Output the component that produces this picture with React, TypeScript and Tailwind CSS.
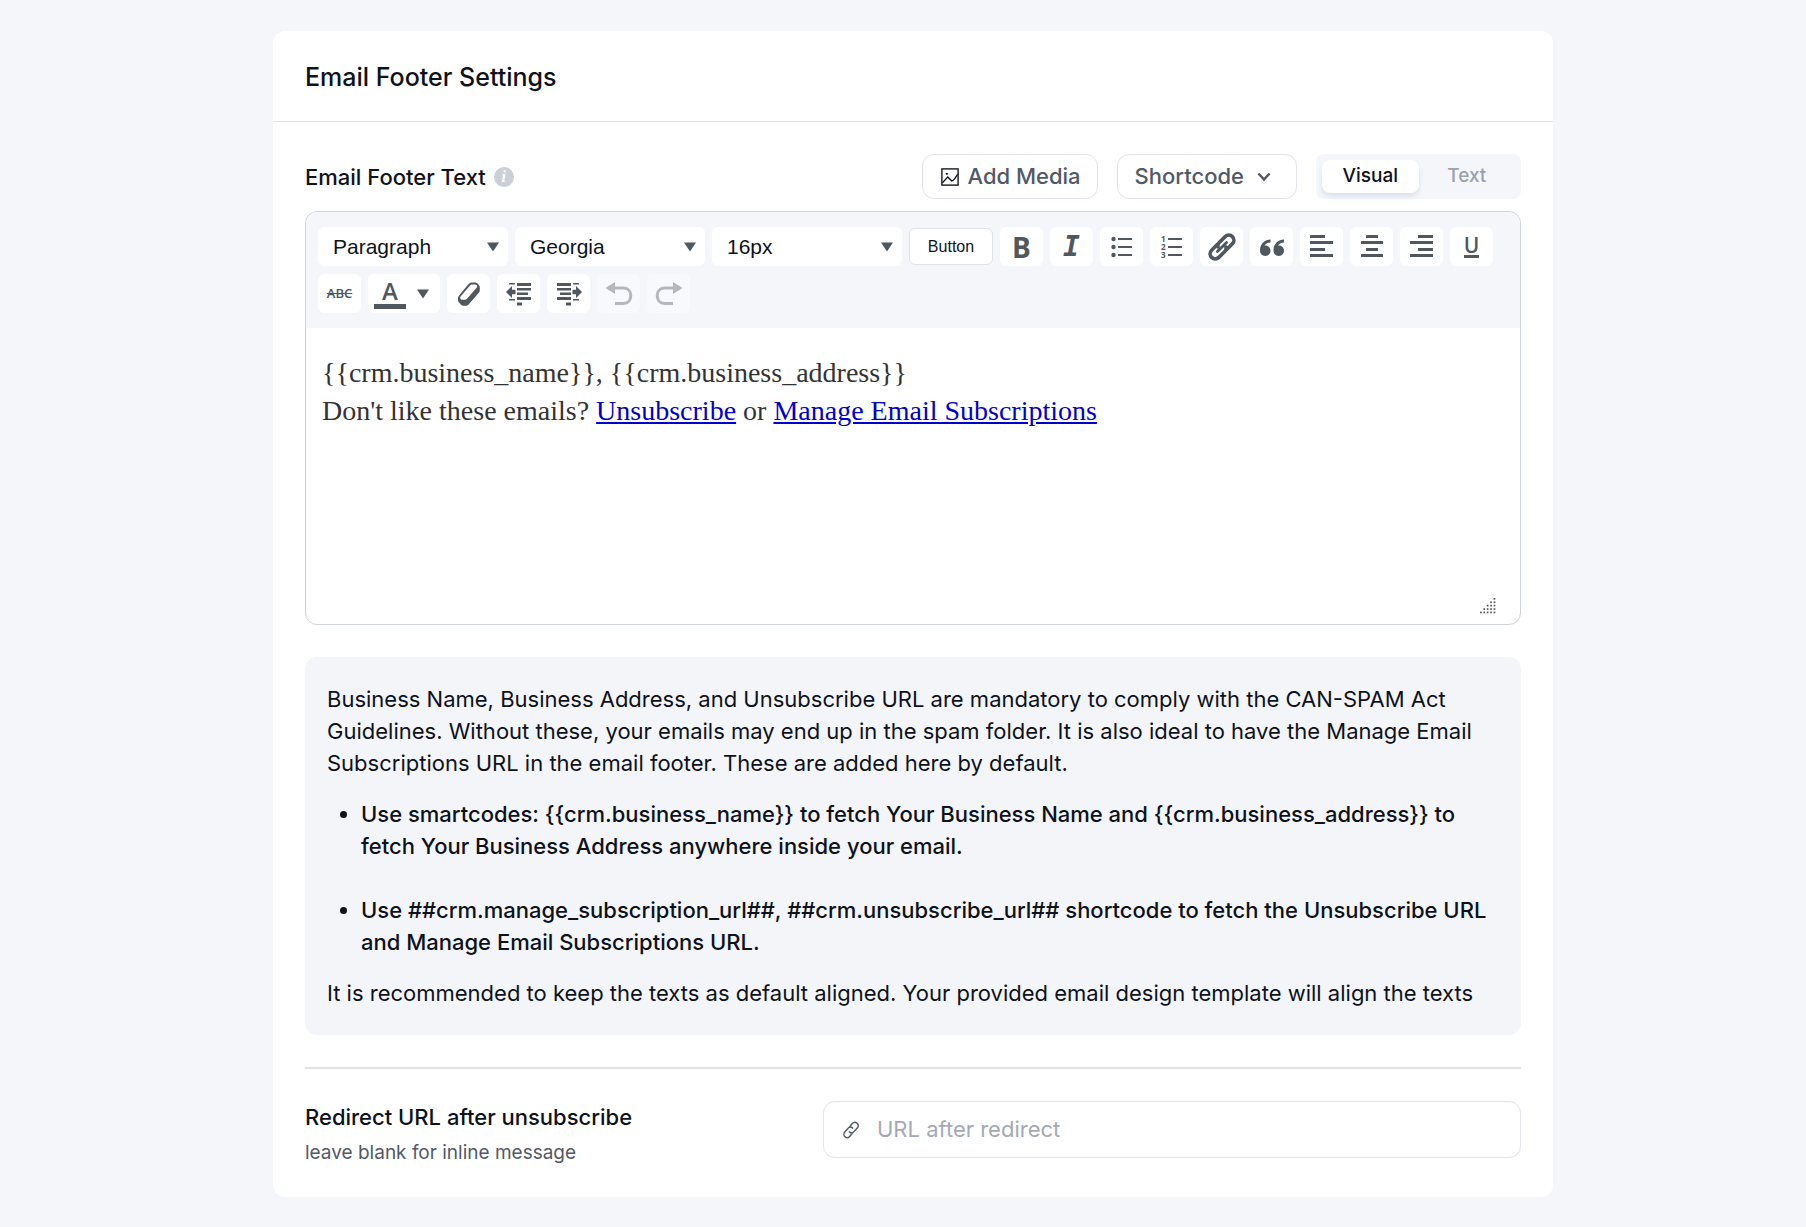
import { useState, type ReactNode } from "react";
import { ImQuotesLeft } from "react-icons/im";

const ui = {
  tool: "flex h-[39px] w-[43px] items-center justify-center rounded-md bg-white text-[#50575e] hover:bg-slate-50",
  outline:
    "flex h-[45px] items-center rounded-xl border border-[#e1e4ea] bg-white text-[22px] font-medium text-[#525866]",
};

const BLOCK_FORMATS = ["Paragraph", "Heading 1", "Heading 2", "Heading 3", "Preformatted"];
const FONT_FAMILIES = ["Georgia", "Arial", "Helvetica", "Verdana", "Tahoma"];
const FONT_SIZES = ["16px", "12px", "14px", "18px", "20px", "24px"];

function Caret() {
  return (
    <svg viewBox="0 0 12 10" className="h-[10px] w-[12px] fill-[#50575e]" aria-hidden="true">
      <path d="M0 0.5h12L6 9.5z" />
    </svg>
  );
}

function ToolbarSelect({ label, options }: { label: string; options: string[] }) {
  return (
    <div className="relative w-[190px]">
      <select
        aria-label={label}
        className="h-[39px] w-full appearance-none rounded-md bg-white pr-8 pl-[15px] font-['Liberation_Sans',sans-serif] text-[21px] text-[#0e121b]"
      >
        {options.map((option) => (
          <option key={option}>{option}</option>
        ))}
      </select>
      <span className="pointer-events-none absolute inset-y-0 right-[9px] flex items-center">
        <Caret />
      </span>
    </div>
  );
}

function ToolButton({
  label,
  disabled = false,
  children,
}: {
  label: string;
  disabled?: boolean;
  children: ReactNode;
}) {
  return (
    <button
      type="button"
      title={label}
      aria-label={label}
      disabled={disabled}
      className={`${ui.tool} disabled:bg-white/40 disabled:text-[#b4b7bb]`}
    >
      {children}
    </button>
  );
}

function Icon({ children }: { children: ReactNode }) {
  return (
    <svg viewBox="0 0 28 28" className="size-7" fill="currentColor" aria-hidden="true">
      {children}
    </svg>
  );
}

// each bar is [x, y, width]
function Bars({ bars }: { bars: [number, number, number][] }) {
  return (
    <Icon>
      {bars.map(([x, y, width]) => (
        <rect key={y} x={x} y={y} width={width} height="3" />
      ))}
    </Icon>
  );
}

function BulletListIcon() {
  return (
    <Icon>
      {[6, 14, 22].map((y) => (
        <g key={y}>
          <circle cx="5.5" cy={y} r="2.2" />
          <rect x="10" y={y - 1} width="14" height="2" />
        </g>
      ))}
    </Icon>
  );
}

function NumberListIcon() {
  return (
    <Icon>
      {[6, 14, 22].map((y, index) => (
        <g key={y}>
          <text x="3" y={y + 3} fontSize="8" fontWeight="700" fontFamily="Open Sans, sans-serif">
            {index + 1}
          </text>
          <rect x="10" y={y - 1} width="14" height="2" />
        </g>
      ))}
    </Icon>
  );
}

function LinkIcon() {
  return (
    <Icon>
      <g
        transform="rotate(-45 14 14)"
        fill="none"
        stroke="currentColor"
        strokeWidth="3.6"
        strokeLinecap="round"
      >
        <path d="M16.800 16.800c-.9 1.500-2.300 2.300-4 2.300H4.400a5.100 5.100 0 0 1 0-10.200h8" />
        <path d="M11.200 11.200c.9-1.500 2.300-2.300 4-2.300h8.400a5.100 5.100 0 0 1 0 10.200h-8" />
        <path d="M7.500 14h13" strokeWidth="2.8" />
      </g>
    </Icon>
  );
}

function ThinLinkIcon() {
  return (
    <svg
      viewBox="0 0 20 20"
      className="size-5 shrink-0"
      fill="none"
      stroke="#525866"
      strokeWidth="1.4"
      strokeLinecap="round"
      aria-hidden="true"
    >
      <g transform="rotate(-48 10 10)">
        <path d="M7.500 10c0 2.200 1 3.300 3 3.300h5.200a3.300 3.300 0 0 0 0-6.600h-3.500" />
        <path d="M12.500 10c0-2.200-1-3.300-3-3.300H4.300a3.300 3.300 0 0 0 0 6.600h3.500" />
      </g>
    </svg>
  );
}

function EraserIcon() {
  return (
    <Icon>
      <path
        fillRule="evenodd"
        d="M13.400 4.200C14.400 3 15.600 2.400 17 2.400h3.200c1 0 1.800.4 2.400 1.100l1.400 1.700c.6.800.8 1.500.8 2.400v2.600c0 1-.3 1.800-1 2.600L13.600 24.400c-.8.9-1.700 1.400-2.900 1.400H8.200c-1 0-1.800-.4-2.400-1.200l-2-2.400c-.5-.7-.8-1.400-.8-2.300v-1.600c0-1 .4-1.900 1.100-2.700zM15 5.600L5.800 16.300c-1.300 1.600-.4 3.500 1.500 3.500h2.300c1.100 0 1.900-.4 2.600-1.200l9.400-10.900C22.800 6.200 22 4.500 20.200 4.500h-2.700c-1 0-1.800.3-2.500 1.100z"
      />
    </Icon>
  );
}

function IndentIcon({ outdent = false }: { outdent?: boolean }) {
  return (
    <Icon>
      <g transform={outdent ? undefined : "matrix(-1 0 0 1 28 0)"}>
        <rect x="4" y="3" width="6" height="1.5" />
        <rect x="12" y="3" width="14" height="3" />
        <rect x="12" y="8" width="14" height="2.5" />
        <rect x="12" y="12.5" width="11" height="2.5" />
        <rect x="12" y="17" width="14" height="3" />
        <rect x="4" y="19" width="6" height="1.5" />
        <rect x="12" y="22.5" width="5" height="3" />
        <path d="M1 12l6-6v3.800h3.500v4.400H7V18z" />
      </g>
    </Icon>
  );
}

function HistoryIcon({ flip = false }: { flip?: boolean }) {
  return (
    <Icon>
      <g transform={flip ? "matrix(-1 0 0 1 28 0)" : undefined}>
        <path d="M0.5 8L10 2v12z" />
        <path
          d="M8 8h10.500c4.500 0 7.300 3.200 7.300 7.700s-2.800 7.700-7.300 7.700H10"
          fill="none"
          stroke="currentColor"
          strokeWidth="3"
        />
      </g>
    </Icon>
  );
}

function ImageIcon() {
  return (
    <svg viewBox="0 0 20 20" className="size-[18px]" fill="none" stroke="#0e121b" strokeWidth="1.5" aria-hidden="true">
      <rect x="1" y="1" width="18" height="18" />
      <path d="M1.5 16.5l6-6.500 4.500 4.500c2.500-.5 4-4 6.500-7.500" />
      <circle cx="6.5" cy="6.5" r="1.2" fill="#0e121b" stroke="none" />
    </svg>
  );
}

function ResizeGrip() {
  const dots = [0, 1, 2, 3, 4].flatMap((row) =>
    Array.from({ length: row + 1 }, (_, index) => [4 - index, row]),
  );
  return (
    <svg viewBox="0 0 16 16" className="size-4 fill-[#50575e]" aria-hidden="true">
      {dots.map(([column, row]) => (
        <rect key={`${column}-${row}`} x={column * 3.4} y={row * 3.4} width="1.7" height="1.7" />
      ))}
    </svg>
  );
}

function Toolbar() {
  return (
    <div className="flex flex-wrap gap-x-[7px] gap-y-[8px] rounded-t-xl bg-[#f4f6fa] px-3 py-[15px]">
      <ToolbarSelect label="Block format" options={BLOCK_FORMATS} />
      <ToolbarSelect label="Font family" options={FONT_FAMILIES} />
      <ToolbarSelect label="Font size" options={FONT_SIZES} />
      <div className="flex h-[39px] w-[84px] items-center">
        <button
          type="button"
          className="h-[37px] w-full rounded-md border border-[#dfe2e8] bg-white font-['Liberation_Sans',sans-serif] text-base text-[#0e121b]"
        >
          Button
        </button>
      </div>
      <ToolButton label="Bold">
        <span className="font-['Open_Sans',sans-serif] text-[28px] leading-none font-bold">B</span>
      </ToolButton>
      <ToolButton label="Italic">
        <span className="font-['DejaVu_Sans_Mono',monospace] text-[28px] leading-none font-bold italic">I</span>
      </ToolButton>
      <ToolButton label="Bulleted list">
        <BulletListIcon />
      </ToolButton>
      <ToolButton label="Numbered list">
        <NumberListIcon />
      </ToolButton>
      <ToolButton label="Insert link">
        <LinkIcon />
      </ToolButton>
      <ToolButton label="Blockquote">
        <ImQuotesLeft className="size-6" />
      </ToolButton>
      <ToolButton label="Align left">
        <Bars bars={[[2, 2, 15], [2, 8, 23], [2, 15, 15], [2, 21, 23]]} />
      </ToolButton>
      <ToolButton label="Align center">
        <Bars bars={[[8, 2, 12], [3, 8, 22], [8, 15, 12], [3, 21, 22]]} />
      </ToolButton>
      <ToolButton label="Align right">
        <Bars bars={[[10, 2, 15], [2, 8, 23], [10, 15, 15], [2, 21, 23]]} />
      </ToolButton>
      <ToolButton label="Underline">
        <span className="border-b-3 border-current font-['Open_Sans',sans-serif] text-[21px] leading-5 font-semibold">
          U
        </span>
      </ToolButton>
      <ToolButton label="Strikethrough">
        <span className="font-['Open_Sans',sans-serif] text-[13px] font-semibold line-through">ABC</span>
      </ToolButton>
      <div className="flex h-[39px] w-[72px] items-center rounded-md bg-white">
        <button
          type="button"
          aria-label="Text color"
          className="ml-[6px] flex w-8 justify-center border-b-5 border-[#50575e] font-['Open_Sans',sans-serif] text-2xl leading-[26px] font-semibold text-[#50575e]"
        >
          A
        </button>
        <button type="button" aria-label="Choose text color" className="flex flex-1 justify-center">
          <Caret />
        </button>
      </div>
      <ToolButton label="Clear formatting">
        <EraserIcon />
      </ToolButton>
      <ToolButton label="Decrease indent">
        <IndentIcon outdent />
      </ToolButton>
      <ToolButton label="Increase indent">
        <IndentIcon />
      </ToolButton>
      <ToolButton label="Undo" disabled>
        <HistoryIcon />
      </ToolButton>
      <ToolButton label="Redo" disabled>
        <HistoryIcon flip />
      </ToolButton>
    </div>
  );
}

function ModeSwitch() {
  const [mode, setMode] = useState("Visual");

  return (
    <div className="flex h-[45px] w-[205px] rounded-lg bg-[#f4f6fa] p-[6px]">
      {["Visual", "Text"].map((name) => (
        <button
          key={name}
          type="button"
          aria-pressed={mode === name}
          onClick={() => setMode(name)}
          className={`flex-1 rounded-lg text-[19px] font-medium ${
            mode === name ? "bg-white text-[#0e121b] shadow-md shadow-slate-300/60" : "text-[#99a0ae]"
          }`}
        >
          {name}
        </button>
      ))}
    </div>
  );
}

function FooterEditor() {
  return (
    <section>
      <div className="flex flex-wrap items-center justify-between gap-3">
        <div className="flex items-center gap-2">
          <h2 className="text-[22px] leading-8 font-medium">Email Footer Text</h2>
          <span
            title="This text is added to the bottom of every email"
            className="flex size-5 items-center justify-center rounded-full bg-[#cacfd8] font-['Liberation_Serif',serif] text-base leading-none font-bold text-white italic"
          >
            i
          </span>
        </div>
        <div className="flex flex-wrap items-center gap-[19px]">
          <button type="button" className={`${ui.outline} gap-2 pr-4 pl-[18px]`}>
            <ImageIcon />
            Add Media
          </button>
          <button type="button" className={`${ui.outline} gap-3 pr-6 pl-[17px]`}>
            Shortcode
            <svg viewBox="0 0 14 10" className="h-[10px] w-4" fill="none" stroke="currentColor" strokeWidth="2.5" aria-hidden="true">
              <path d="M1.5 1.5L7 7.5l5.500-6" />
            </svg>
          </button>
          <ModeSwitch />
        </div>
      </div>

      <div className="mt-3 rounded-xl border border-[#cfd3da] bg-white">
        <Toolbar />
        <div
          role="textbox"
          aria-label="Email footer text"
          contentEditable
          suppressContentEditableWarning
          className="min-h-[270px] px-4 pt-[26px] font-['Liberation_Serif',serif] text-[28px] leading-[38px] text-[#333333] outline-none"
        >
          {"{{crm.business_name}}, {{crm.business_address}}"}
          <br />
          Don't like these emails?{" "}
          <a href="#unsubscribe" className="text-[#0000cc] underline">
            Unsubscribe
          </a>{" "}
          or{" "}
          <a href="#manage" className="text-[#0000cc] underline">
            Manage Email Subscriptions
          </a>
        </div>
        <div className="flex justify-end pr-6 pb-[10px]">
          <ResizeGrip />
        </div>
      </div>
    </section>
  );
}

function ComplianceNote() {
  return (
    <div className="mt-8 rounded-xl bg-[#f3f5f9] px-[22px] py-[26px] text-[22px] leading-8">
      <p>
        Business Name, Business Address, and Unsubscribe URL are mandatory to comply with the CAN-SPAM Act
        Guidelines. Without these, your emails may end up in the spam folder. It is also ideal to have the
        Manage Email Subscriptions URL in the email footer. These are added here by default.
      </p>
      <ul className="my-[19px] list-disc space-y-8 pl-[34px] font-medium">
        <li>
          {"Use smartcodes: {{crm.business_name}} to fetch Your Business Name and {{crm.business_address}} to fetch Your Business Address anywhere inside your email."}
        </li>
        <li>
          Use ##crm.manage_subscription_url##, ##crm.unsubscribe_url## shortcode to fetch the Unsubscribe URL
          and Manage Email Subscriptions URL.
        </li>
      </ul>
      <p>
        It is recommended to keep the texts as default aligned. Your provided email design template will
        align the texts
      </p>
    </div>
  );
}

function RedirectField() {
  return (
    <div className="mt-8 flex items-start border-t-2 border-[#e1e2e4] pt-8">
      <div className="flex-1">
        <label htmlFor="redirect-url" className="block text-[22px] leading-8 font-medium">
          Redirect URL after unsubscribe
        </label>
        <p className="mt-1 text-[19px] leading-8 text-[#525866]">leave blank for inline message</p>
      </div>
      <div className="flex h-[57px] w-[698px] items-center gap-4 rounded-xl border border-[#e1e4ea] bg-white pr-4 pl-[17px]">
        <ThinLinkIcon />
        <input
          id="redirect-url"
          type="url"
          placeholder="URL after redirect"
          className="min-w-0 flex-1 bg-transparent text-[22px] outline-none placeholder:text-[#a4a9b3]"
        />
      </div>
    </div>
  );
}

export default function App() {
  return (
    <main className="min-h-screen bg-[#f5f6fa] pt-[31px] pr-4 pb-[30px] pl-9 font-[Inter,sans-serif] text-[#0e121b]">
      <div className="mx-auto max-w-[1280px] rounded-xl bg-white">
        <header className="border-b border-[#e1e4ea] px-8 pt-[27px] pb-[25px]">
          <h1 className="text-[25px] leading-[38px] font-medium">Email Footer Settings</h1>
        </header>
        <div className="px-8 pt-8 pb-7">
          <FooterEditor />
          <ComplianceNote />
          <RedirectField />
        </div>
      </div>
    </main>
  );
}
